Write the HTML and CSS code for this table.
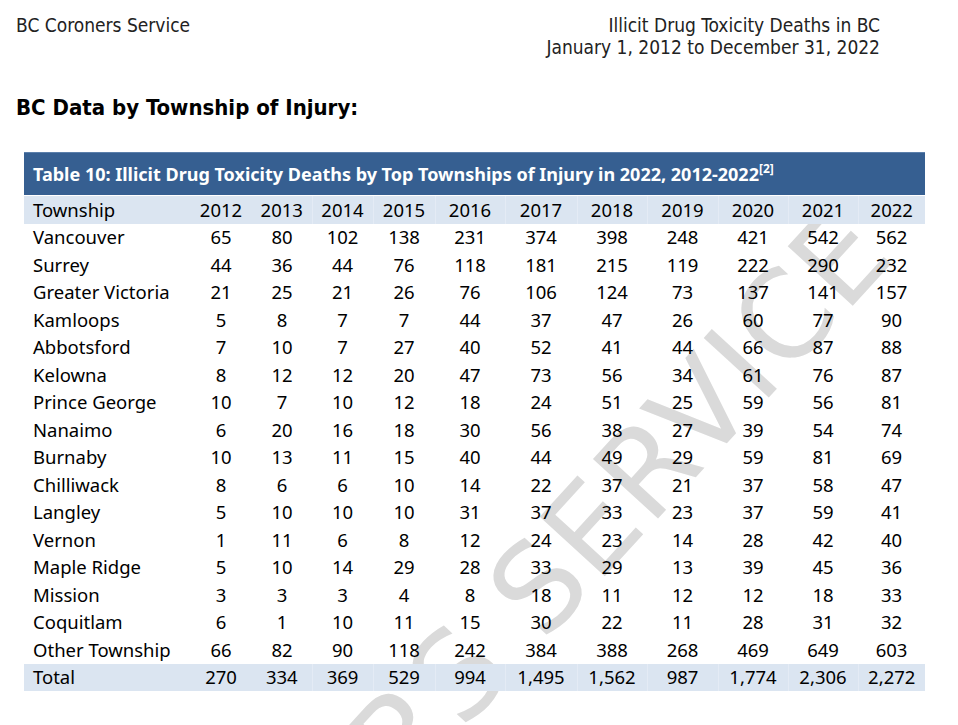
FILE: index.html
```html
<!DOCTYPE html>
<html lang="en">
<head>
<meta charset="utf-8">
<title>BC Data by Township of Injury</title>
<link rel="stylesheet" href="styles.css">
</head>
<body>
<div class="page">
  <div class="watermark" aria-hidden="true">BC CORONERS SERVICE</div>
  <header class="doc-header">
    <div class="doc-left">BC Coroners Service</div>
    <div class="doc-right">
      <div>Illicit Drug Toxicity Deaths in BC</div>
      <div>January 1, 2012 to December 31, 2022</div>
    </div>
  </header>
  <h2 class="section-title">BC Data by Township of Injury:</h2>
  <div class="table-wrap">
    <div class="table-title">Table 10: Illicit Drug Toxicity Deaths by Top Townships of Injury in 2022, 2012-2022<sup>[2]</sup></div>
    <table class="data">
      <colgroup>
        <col class="c-name"><col class="c-62"><col class="c-60"><col class="c-61"><col class="c-62"><col class="c-70"><col class="c-72"><col class="c-70"><col class="c-71"><col class="c-70"><col class="c-70"><col class="c-67">
      </colgroup>
      <thead>
        <tr class="shade"><th>Township</th><th>2012</th><th>2013</th><th>2014</th><th>2015</th><th>2016</th><th>2017</th><th>2018</th><th>2019</th><th>2020</th><th>2021</th><th>2022</th></tr>
      </thead>
      <tbody>
        <tr><td>Vancouver</td><td>65</td><td>80</td><td>102</td><td>138</td><td>231</td><td>374</td><td>398</td><td>248</td><td>421</td><td>542</td><td>562</td></tr>
        <tr><td>Surrey</td><td>44</td><td>36</td><td>44</td><td>76</td><td>118</td><td>181</td><td>215</td><td>119</td><td>222</td><td>290</td><td>232</td></tr>
        <tr><td>Greater Victoria</td><td>21</td><td>25</td><td>21</td><td>26</td><td>76</td><td>106</td><td>124</td><td>73</td><td>137</td><td>141</td><td>157</td></tr>
        <tr><td>Kamloops</td><td>5</td><td>8</td><td>7</td><td>7</td><td>44</td><td>37</td><td>47</td><td>26</td><td>60</td><td>77</td><td>90</td></tr>
        <tr><td>Abbotsford</td><td>7</td><td>10</td><td>7</td><td>27</td><td>40</td><td>52</td><td>41</td><td>44</td><td>66</td><td>87</td><td>88</td></tr>
        <tr><td>Kelowna</td><td>8</td><td>12</td><td>12</td><td>20</td><td>47</td><td>73</td><td>56</td><td>34</td><td>61</td><td>76</td><td>87</td></tr>
        <tr><td>Prince George</td><td>10</td><td>7</td><td>10</td><td>12</td><td>18</td><td>24</td><td>51</td><td>25</td><td>59</td><td>56</td><td>81</td></tr>
        <tr><td>Nanaimo</td><td>6</td><td>20</td><td>16</td><td>18</td><td>30</td><td>56</td><td>38</td><td>27</td><td>39</td><td>54</td><td>74</td></tr>
        <tr><td>Burnaby</td><td>10</td><td>13</td><td>11</td><td>15</td><td>40</td><td>44</td><td>49</td><td>29</td><td>59</td><td>81</td><td>69</td></tr>
        <tr><td>Chilliwack</td><td>8</td><td>6</td><td>6</td><td>10</td><td>14</td><td>22</td><td>37</td><td>21</td><td>37</td><td>58</td><td>47</td></tr>
        <tr><td>Langley</td><td>5</td><td>10</td><td>10</td><td>10</td><td>31</td><td>37</td><td>33</td><td>23</td><td>37</td><td>59</td><td>41</td></tr>
        <tr><td>Vernon</td><td>1</td><td>11</td><td>6</td><td>8</td><td>12</td><td>24</td><td>23</td><td>14</td><td>28</td><td>42</td><td>40</td></tr>
        <tr><td>Maple Ridge</td><td>5</td><td>10</td><td>14</td><td>29</td><td>28</td><td>33</td><td>29</td><td>13</td><td>39</td><td>45</td><td>36</td></tr>
        <tr><td>Mission</td><td>3</td><td>3</td><td>3</td><td>4</td><td>8</td><td>18</td><td>11</td><td>12</td><td>12</td><td>18</td><td>33</td></tr>
        <tr><td>Coquitlam</td><td>6</td><td>1</td><td>10</td><td>11</td><td>15</td><td>30</td><td>22</td><td>11</td><td>28</td><td>31</td><td>32</td></tr>
        <tr><td>Other Township</td><td>66</td><td>82</td><td>90</td><td>118</td><td>242</td><td>384</td><td>388</td><td>268</td><td>469</td><td>649</td><td>603</td></tr>
      </tbody>
      <tfoot>
        <tr class="shade"><td>Total</td><td>270</td><td>334</td><td>369</td><td>529</td><td>994</td><td>1,495</td><td>1,562</td><td>987</td><td>1,774</td><td>2,306</td><td>2,272</td></tr>
      </tfoot>
    </table>
  </div>
</div>
</body>
</html>
```
FILE: styles.css
```css
html, body {
  margin: 0;
  padding: 0;
  background: #ffffff;
}

.page {
  position: relative;
  width: 958px;
  height: 725px;
  overflow: hidden;
  color: #000;
}

/* Diagonal "BC CORONERS SERVICE" watermark; anchored at the baseline end of the last letter */
.watermark {
  position: absolute;
  left: 898px;
  top: 257px;
  font-family: "DejaVu Sans", sans-serif;
  font-size: 121px;
  line-height: 1;
  letter-spacing: 2px;
  color: #dadada;
  white-space: nowrap;
  transform-origin: 0 0;
  transform: rotate(-47.5deg) translate(-100%, -0.846em);
  z-index: 0;
  pointer-events: none;
}

.doc-header {
  position: relative;
  z-index: 1;
  display: flex;
  justify-content: space-between;
  padding: 14px 78px 0 16px;
  font-family: "DejaVu Sans", sans-serif;
  font-stretch: condensed;
  font-size: 19px;
  line-height: 22px;
  color: #222;
}

.doc-right {
  text-align: right;
}

.section-title {
  position: relative;
  z-index: 1;
  margin: 37px 0 0 16px;
  font-family: "DejaVu Sans", sans-serif;
  font-stretch: condensed;
  font-weight: bold;
  font-size: 22px;
  line-height: 26px;
  color: #000;
}

.table-wrap {
  position: relative;
  z-index: 1;
  margin: 31px 0 0 24px;
  width: 901px;
  font-family: "Noto Sans", sans-serif;
}

.table-title {
  height: 43px;
  box-sizing: border-box;
  padding: 0 9px;
  background: #365f91;
  border-top: 1px solid #5b7fab;
  color: #fff;
  font-weight: bold;
  font-size: 18px;
  line-height: 42px;
  white-space: nowrap;
  margin-bottom: 1px;
}

.table-title sup {
  font-size: 12px;
  line-height: 0;
  vertical-align: 8px;
}

.data {
  width: 901px;
  border-collapse: collapse;
  table-layout: fixed;
  font-size: 18.5px;
  color: #000;
}

.c-name { width: 166px; }
.c-60 { width: 60px; }
.c-61 { width: 61px; }
.c-62 { width: 62px; }
.c-67 { width: 67px; }
.c-70 { width: 70px; }
.c-71 { width: 71px; }
.c-72 { width: 72px; }

.data th,
.data td {
  height: 27.5px;
  padding: 0;
  text-align: center;
  font-weight: normal;
  line-height: 22px;
  white-space: nowrap;
}

.data th:first-child,
.data td:first-child {
  text-align: left;
  padding-left: 9px;
}

.data tr.shade th,
.data tr.shade td {
  background: #dbe5f1;
}

.data tr.shade th:nth-child(n+4),
.data tr.shade td:nth-child(n+4) {
  border-left: 1px solid #e4ebf5;
}
```
